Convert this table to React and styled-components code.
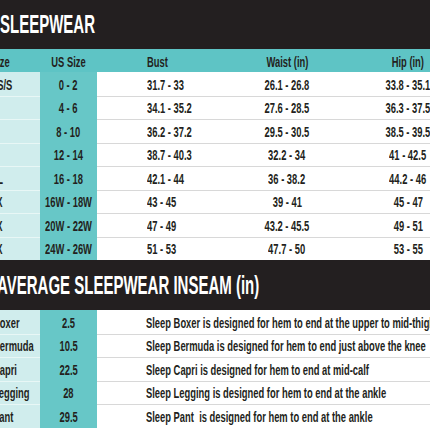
import React from "react";
import styled, { createGlobalStyle } from "styled-components";

const Global = createGlobalStyle`
  html, body { margin: 0; padding: 0; background: #fff; overflow: hidden; }
  body { font-family: "Liberation Sans", Arial, sans-serif; color: #231f20; }
`;

const Viewport = styled.div`
  width: 430px;
  height: 430px;
  overflow: hidden;
`;

const Sheet = styled.div`
  width: 504px;
  margin-left: -40px;
`;

const Band = styled.div`
  height: ${(p) => p.$h}px;
  background: #231f20;
  display: flex;
  align-items: center;
  padding-left: ${(p) => p.$pad}px;
  box-sizing: border-box;
`;

const BandTitle = styled.h1`
  margin: 0;
  color: #fff;
  font-size: 25px;
  font-weight: 700;
  line-height: 1;
  white-space: nowrap;
  transform: scaleX(0.6);
  transform-origin: left center;
`;

const Row = styled.div`
  display: grid;
  grid-template-columns: ${(p) => p.$cols};
  height: ${(p) => p.$h}px;
`;

const tones = {
  head: "#5ec4c5",
  label: "#d0eded",
  key: "#67c7c7",
  data: "#ffffff",
};

const lines = {
  head: "transparent",
  label: "#e8f7f6",
  key: "#67c7c7",
  data: "#d8d8d8",
};

const Cell = styled.div`
  display: flex;
  align-items: center;
  justify-content: ${(p) => (p.$align === "center" ? "center" : "flex-start")};
  padding-left: ${(p) => p.$pad || 0}px;
  background: ${(p) => tones[p.$tone]};
  border-top: 1px solid ${(p) => (p.$first ? "transparent" : lines[p.$tone])};
  box-sizing: border-box;
  white-space: pre;
`;

const Txt = styled.span`
  display: inline-block;
  font-size: 15px;
  font-weight: 700;
  line-height: 1;
  color: #231f20;
  transform: scaleX(0.625);
  transform-origin: ${(p) => (p.$align === "center" ? "center" : "left")} center;
`;

const SIZE_COLS = "80px 57px 125px 130px 112px";
const INSEAM_COLS = "80px 57px 367px";

const sizes = [
  ["XS/S", "0 - 2", "31.7 - 33", "26.1 - 26.8", "33.8 - 35.1"],
  ["S", "4 - 6", "34.1 - 35.2", "27.6 - 28.5", "36.3 - 37.5"],
  ["M", "8 - 10", "36.2 - 37.2", "29.5 - 30.5", "38.5 - 39.5"],
  ["L", "12 - 14", "38.7 - 40.3", "32.2 - 34", "41 - 42.5"],
  ["XL", "16 - 18", "42.1 - 44", "36 - 38.2", "44.2 - 46"],
  ["1X", "16W - 18W", "43 - 45", "39 - 41", "45 - 47"],
  ["2X", "20W - 22W", "47 - 49", "43.2 - 45.5", "49 - 51"],
  ["3X", "24W - 26W", "51 - 53", "47.7 - 50", "53 - 55"],
];

const inseams = [
  ["Boxer", "2.5", "Sleep Boxer is designed for hem to end at the upper to mid-thigh"],
  ["Bermuda", "10.5", "Sleep Bermuda is designed for hem to end just above the knee"],
  ["Capri", "22.5", "Sleep Capri is designed for hem to end at mid-calf"],
  ["Legging", "28", "Sleep Legging is designed for hem to end at the ankle"],
  ["Pant", "29.5", "Sleep Pant  is designed for hem to end at the ankle"],
];

function C({ tone, align, pad, first, children }) {
  return (
    <Cell $tone={tone} $align={align} $pad={pad} $first={first}>
      <Txt $align={align}>{children}</Txt>
    </Cell>
  );
}

export default function App() {
  return (
    <Viewport>
      <Global />
      <Sheet>
        <Band $h={49} $pad={40}>
          <BandTitle>SLEEPWEAR</BandTitle>
        </Band>
        <Row $cols={SIZE_COLS} $h={23}>
          <C tone="head" pad={31} first>Size</C>
          <C tone="head" align="center" first>US Size</C>
          <C tone="head" pad={50} first>Bust</C>
          <C tone="head" align="center" first>Waist (in)</C>
          <C tone="head" align="center" first>Hip (in)</C>
        </Row>
        {sizes.map((r, i) => (
          <Row key={r[0]} $cols={SIZE_COLS} $h={23.5}>
            <C tone="label" pad={31} first={i === 0}>{r[0]}</C>
            <C tone="key" align="center" first={i === 0}>{r[1]}</C>
            <C tone="data" pad={50} first={i === 0}>{r[2]}</C>
            <C tone="data" align="center" first={i === 0}>{r[3]}</C>
            <C tone="data" align="center" first={i === 0}>{r[4]}</C>
          </Row>
        ))}
        <Band $h={50} $pad={37}>
          <BandTitle>AVERAGE SLEEPWEAR INSEAM (in)</BandTitle>
        </Band>
        {inseams.map((r, i) => (
          <Row key={r[0]} $cols={INSEAM_COLS} $h={23.5}>
            <C tone="label" pad={33} first={i === 0}>{r[0]}</C>
            <C tone="key" align="center" first={i === 0}>{r[1]}</C>
            <C tone="data" pad={49} first={i === 0}>{r[2]}</C>
          </Row>
        ))}
      </Sheet>
    </Viewport>
  );
}
